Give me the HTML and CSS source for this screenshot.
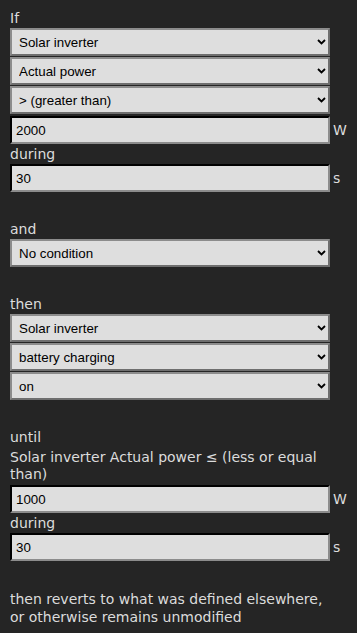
FILE: index.html
```html
<!DOCTYPE html>
<html lang="en">
<head>
    <meta charset="UTF-8">
    <meta name="viewport" content="width=device-width, initial-scale=1.0">
    <title>Rule editor</title>
    <link rel="stylesheet" href="styles.css">
</head>
<body>
    <main class="rule">
        <!-- Condition -->
        <div class="block">
            <div class="label">If</div>
            <select class="pick">
                <option>Solar inverter</option>
            </select>
            <select class="pick">
                <option>Actual power</option>
            </select>
            <select class="pick">
                <option>&gt; (greater than)</option>
            </select>
            <div class="field">
                <input type="text" class="num" value="2000">
                <span class="unit">W</span>
            </div>
            <div class="label">during</div>
            <div class="field">
                <input type="text" class="num" value="30">
                <span class="unit">s</span>
            </div>
        </div>

        <div class="block">
            <div class="label">and</div>
            <select class="pick">
                <option>No condition</option>
            </select>
        </div>

        <!-- Action -->
        <div class="block">
            <div class="label">then</div>
            <select class="pick">
                <option>Solar inverter</option>
            </select>
            <select class="pick">
                <option>battery charging</option>
            </select>
            <select class="pick">
                <option>on</option>
            </select>
        </div>

        <!-- End condition -->
        <div class="block">
            <div class="label until">until</div>
            <div class="label wrap">Solar inverter Actual power &le; (less or equal than)</div>
            <div class="field">
                <input type="text" class="num" value="1000">
                <span class="unit">W</span>
            </div>
            <div class="label">during</div>
            <div class="field">
                <input type="text" class="num" value="30">
                <span class="unit">s</span>
            </div>
        </div>

        <p class="note">then reverts to what was defined elsewhere, or otherwise remains unmodified</p>
    </main>
</body>
</html>
```

FILE: styles.css
```css
body {
    margin: 0;
    padding: 0;
    background: #252525;
    color: #dcdcdc;
    font-family: "DejaVu Sans", Verdana, sans-serif;
    font-size: 14px;
}

.rule {
    padding: 10px 10px 0 10px;
    width: 320px;
}

.block {
    margin-bottom: 29px;
}

.label {
    line-height: 16px;
    margin-bottom: 2px;
}

.until {
    margin-bottom: 4px;
}

.wrap {
    line-height: 17px;
}

.pick {
    display: block;
    box-sizing: border-box;
    width: 320px;
    height: 28px;
    margin: 0 0 1px 0;
    padding: 0 24px 0 7px;
    font-family: "Liberation Sans", Arial, sans-serif;
    font-size: 13.33px;
    color: #000;
    background-color: #dedede;
    background-image: url("data:image/svg+xml,%3Csvg xmlns='http://www.w3.org/2000/svg' width='9' height='6' viewBox='0 0 9 6'%3E%3Cpath d='M1 1l3.5 3.5L8 1' fill='none' stroke='%23000' stroke-width='1.8'/%3E%3C/svg%3E");
    background-repeat: no-repeat;
    background-position: right 2px center;
    border: 2px solid #8c8c8c;
    border-right-color: #6e6e6e;
    border-bottom-color: #6e6e6e;
    border-radius: 0;
    -webkit-appearance: none;
    appearance: none;
}

.field {
    display: flex;
    align-items: center;
    margin: 2px 0 2px 0;
}

.num {
    flex: none;
    box-sizing: border-box;
    width: 320px;
    height: 28px;
    padding: 0 4px;
    font-family: "Liberation Sans", Arial, sans-serif;
    font-size: 13.33px;
    color: #000;
    background: #dedede;
    border: 2px inset #8c8c8c;
    border-top-color: #3a3a3a;
    border-left-color: #3a3a3a;
}

.unit {
    margin-left: 3px;
}

.note {
    margin: 28px 0 0 0;
    line-height: 18px;
}
```
